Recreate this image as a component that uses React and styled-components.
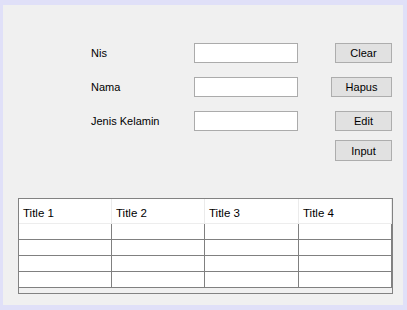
import React from 'react';
import styled, { createGlobalStyle } from 'styled-components';

const GlobalStyle = createGlobalStyle`
  html, body {
    margin: 0;
    padding: 0;
    background: #e0e0f8;
  }
  * {
    box-sizing: border-box;
  }
`;

const Frame = styled.div`
  width: 407px;
  height: 310px;
  border-style: solid;
  border-color: #e0e0f8;
  border-width: 5px 4px 5px 3px;
  background: #f0f0f0;
  font-family: 'Liberation Sans', Arial, sans-serif;
  font-size: 11px;
  color: #000;
  display: flex;
  flex-direction: column;
`;

const Form = styled.div`
  display: grid;
  grid-template-columns: 103px 104px 33px 61px;
  grid-template-rows: 20px 20px 20px 16px;
  row-gap: 14px;
  padding: 38px 0 0 88px;
`;

const Label = styled.div`
  grid-column: 1;
  display: flex;
  align-items: center;
`;

const Field = styled.input`
  grid-column: 2;
  width: 104px;
  height: 20px;
  border: 1px solid #ababab;
  background: #fff;
  margin: 0;
  padding: 0 3px;
  font: inherit;
  outline: none;
`;

const Button = styled.button`
  grid-column: 4;
  justify-self: end;
  width: ${(p) => (p.$wide ? '61px' : '57px')};
  height: ${(p) => (p.$tall ? '21px' : '20px')};
  margin-top: ${(p) => (p.$tight ? '-5px' : '0')};
  padding: 0;
  border: 1px solid #adadad;
  background: #e1e1e1;
  font: inherit;
  color: #000;
  cursor: pointer;
`;

const Table = styled.div`
  margin: 37px 10px 0 15px;
  width: 375px;
  height: 96px;
  border: 1px solid #828282;
  background: #f0f0f0;
`;

const Row = styled.div`
  display: grid;
  grid-template-columns: 93px 93px 94px 93px;
`;

const HeadCell = styled.div`
  height: 25px;
  background: #fff;
  border-right: 1px solid #ebebeb;
  border-bottom: 1px solid #ededed;
  padding: 3px 0 0 4px;
  display: flex;
  align-items: center;
  font-size: 11.5px;
`;

const Cell = styled.div`
  height: 16px;
  background: #fff;
  border-right: 1px solid #808080;
  border-bottom: 1px solid #808080;
`;

const fields = ['Nis', 'Nama', 'Jenis Kelamin'];
const buttons = [{ text: 'Clear' }, { text: 'Hapus', wide: true }, { text: 'Edit' }];
const titles = ['Title 1', 'Title 2', 'Title 3', 'Title 4'];

export default function App() {
  return (
    <>
      <GlobalStyle />
      <Frame>
        <Form>
          {fields.map((f, i) => (
            <React.Fragment key={f}>
              <Label style={{ gridRow: i + 1 }}>{f}</Label>
              <Field style={{ gridRow: i + 1 }} />
              <Button style={{ gridRow: i + 1 }} $wide={buttons[i].wide}>
                {buttons[i].text}
              </Button>
            </React.Fragment>
          ))}
          <Button style={{ gridRow: 4 }} $tight $tall>
            Input
          </Button>
        </Form>
        <Table>
          <Row>
            {titles.map((t) => (
              <HeadCell key={t}>{t}</HeadCell>
            ))}
          </Row>
          {[0, 1, 2, 3].map((r) => (
            <Row key={r}>
              {titles.map((t) => (
                <Cell key={t} />
              ))}
            </Row>
          ))}
        </Table>
      </Frame>
    </>
  );
}
